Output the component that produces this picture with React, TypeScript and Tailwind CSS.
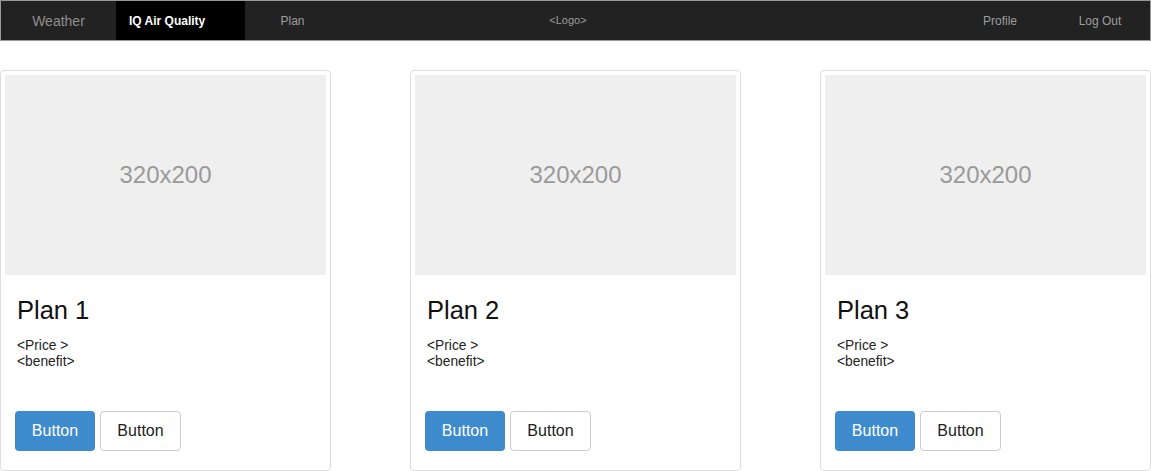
import React from "react";

const plans = ["Plan 1", "Plan 2", "Plan 3"];

function NavBar() {
  return (
    <nav className="flex h-[41px] w-full border border-[#9a9a9a] bg-[#222222] text-xs text-[#9d9d9d]">
      <a className="flex w-[115px] items-center justify-center text-sm text-[#8f8f8f]">
        Weather
      </a>
      <a className="flex w-[129px] items-center bg-black pl-[13px] font-bold text-white">
        IQ Air Quality
      </a>
      <a className="flex w-[95px] items-center justify-center">Plan</a>
      <div className="flex w-[456px] items-center justify-center text-[11px]">
        &lt;Logo&gt;
      </div>
      <div className="flex-1" />
      <a className="flex w-[100px] items-center justify-center">Profile</a>
      <a className="flex w-[100px] items-center justify-center">Log Out</a>
    </nav>
  );
}

function PlanCard({ title }: { title: string }) {
  return (
    <div className="flex h-[401px] w-[331px] flex-col rounded border border-[#dddddd] bg-white p-1">
      <div className="flex h-[200px] w-full items-center justify-center bg-[#efefef] text-2xl text-[#9a9a9a]">
        320x200
      </div>
      <div className="flex flex-1 flex-col px-[10px] pt-[21px] pb-[15px]">
        <h3 className="pl-[2px] text-[25.5px] leading-[1.1] text-[#111]">{title}</h3>
        <p className="mt-[14px] pl-[2px] text-[13.8px] leading-4 text-[#222]">
          &lt;Price &gt;
          <br />
          &lt;benefit&gt;
        </p>
        <div className="mt-auto flex gap-[5px]">
          <button className="h-10 w-20 rounded bg-[#3d8bcd] text-base text-white">
            Button
          </button>
          <button className="h-10 w-[81px] rounded border border-[#cccccc] bg-white text-base text-[#222]">
            Button
          </button>
        </div>
      </div>
    </div>
  );
}

export default function App() {
  return (
    <div
      className="min-h-[471px] bg-white"
      style={{ fontFamily: '"Liberation Sans", Arial, sans-serif' }}
    >
      <NavBar />
      <div className="mt-[29px] flex justify-between">
        {plans.map((p) => (
          <PlanCard key={p} title={p} />
        ))}
      </div>
    </div>
  );
}
